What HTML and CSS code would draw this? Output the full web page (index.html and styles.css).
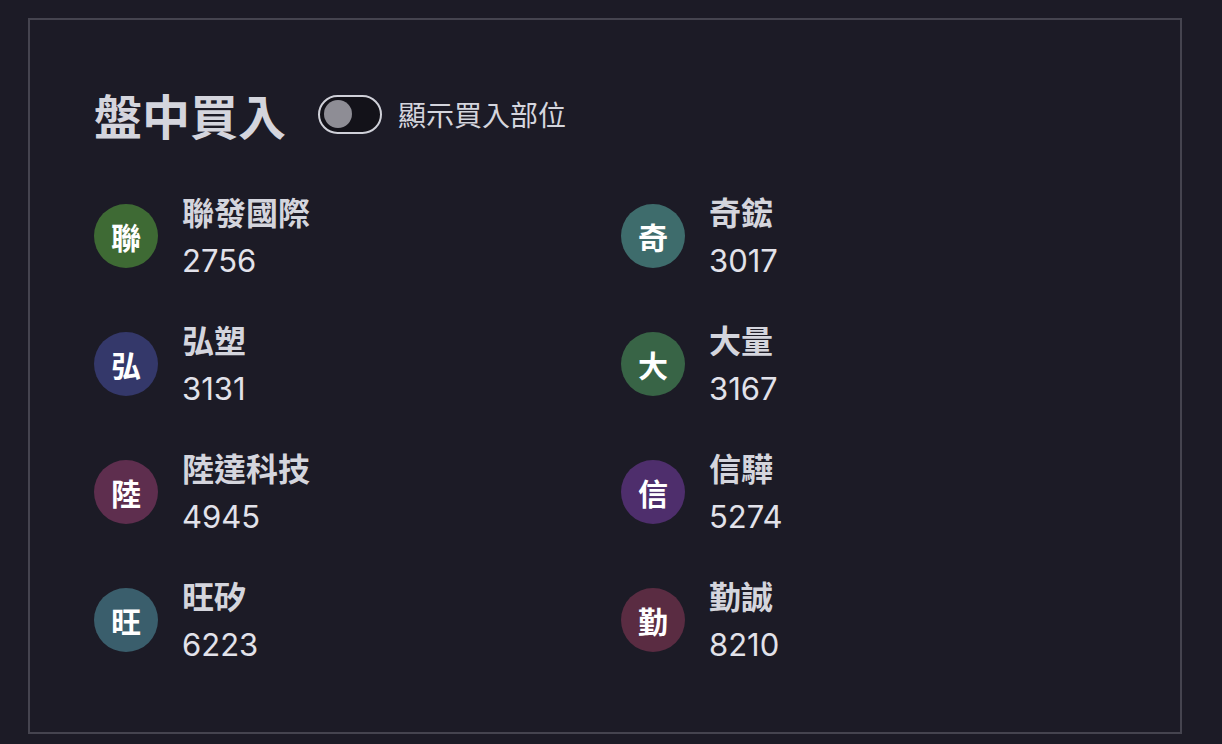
FILE: index.html
```html
<!DOCTYPE html>
<html lang="zh-Hant">
<head>
<meta charset="utf-8">
<title>盤中買入</title>
<link rel="stylesheet" href="styles.css">
</head>
<body>
<section class="panel">
  <header class="panel-head">
    <h1 class="title">盤中買入</h1>
    <label class="switch">
      <span class="track"><span class="knob"></span></span>
      <span class="switch-label">顯示買入部位</span>
    </label>
  </header>
  <ul class="stock-grid">
    <li class="stock"><span class="avatar c-green">聯</span><div class="info"><span class="name">聯發國際</span><span class="code">2756</span></div></li>
    <li class="stock"><span class="avatar c-teal">奇</span><div class="info"><span class="name">奇鋐</span><span class="code">3017</span></div></li>
    <li class="stock"><span class="avatar c-navy">弘</span><div class="info"><span class="name">弘塑</span><span class="code">3131</span></div></li>
    <li class="stock"><span class="avatar c-forest">大</span><div class="info"><span class="name">大量</span><span class="code">3167</span></div></li>
    <li class="stock"><span class="avatar c-plum">陸</span><div class="info"><span class="name">陸達科技</span><span class="code">4945</span></div></li>
    <li class="stock"><span class="avatar c-purple">信</span><div class="info"><span class="name">信驊</span><span class="code">5274</span></div></li>
    <li class="stock"><span class="avatar c-slate">旺</span><div class="info"><span class="name">旺矽</span><span class="code">6223</span></div></li>
    <li class="stock"><span class="avatar c-wine">勤</span><div class="info"><span class="name">勤誠</span><span class="code">8210</span></div></li>
  </ul>
</section>
</body>
</html>
```

FILE: styles.css
```css
html, body {
  margin: 0;
  padding: 0;
  background: #1c1b26;
}
body {
  padding: 18px 40px 10px 28px;
  font-family: Inter, "Noto Sans CJK TC", sans-serif;
  color: #d6d6de;
}
.panel {
  border: 2px solid #45444f;
  padding: 61px 64px 64px 64px;
}
.panel-head {
  display: flex;
  align-items: center;
  height: 66px;
}
.title {
  margin: 0;
  font-family: "Noto Sans CJK TC", sans-serif;
  font-size: 48px;
  font-weight: 700;
  line-height: 66px;
  color: #d4d5dd;
}
.switch {
  display: flex;
  align-items: center;
  gap: 16px;
  margin-left: 32px;
}
.track {
  box-sizing: border-box;
  width: 64px;
  height: 39px;
  border: 2px solid #cfd0d8;
  border-radius: 20px;
  background: #131219;
  display: flex;
  align-items: center;
  padding-left: 4px;
}
.knob {
  width: 28px;
  height: 28px;
  border-radius: 50%;
  background: #8e8d95;
}
.switch-label {
  font-family: "Noto Sans CJK TC", sans-serif;
  font-size: 28px;
  color: #d4d5dd;
  line-height: 1;
}
.stock-grid {
  list-style: none;
  margin: 41px 0 0 0;
  padding: 0;
  display: grid;
  grid-template-columns: 1fr 1fr;
  column-gap: 32px;
  row-gap: 32px;
}
.stock {
  display: flex;
  align-items: center;
  gap: 24px;
}
.avatar {
  flex: none;
  width: 64px;
  height: 64px;
  border-radius: 50%;
  display: flex;
  align-items: center;
  justify-content: center;
  font-family: "Noto Sans CJK TC", sans-serif;
  font-size: 30px;
  font-weight: 700;
  color: #ffffff;
}
.info {
  display: flex;
  flex-direction: column;
}
.name {
  font-family: "Noto Sans CJK TC", sans-serif;
  font-size: 32px;
  font-weight: 700;
  line-height: 46px;
  color: #d4d5dd;
}
.code {
  font-size: 31px;
  font-weight: 400;
  line-height: 47px;
  margin-top: 3px;
  color: #e2e2ea;
}
.c-green { background: #3e6a34; }
.c-teal { background: #3e6c6c; }
.c-navy { background: #34386a; }
.c-forest { background: #386446; }
.c-plum { background: #5e2e4e; }
.c-purple { background: #4e2e6c; }
.c-slate { background: #3a5e6c; }
.c-wine { background: #5a2c42; }
```
